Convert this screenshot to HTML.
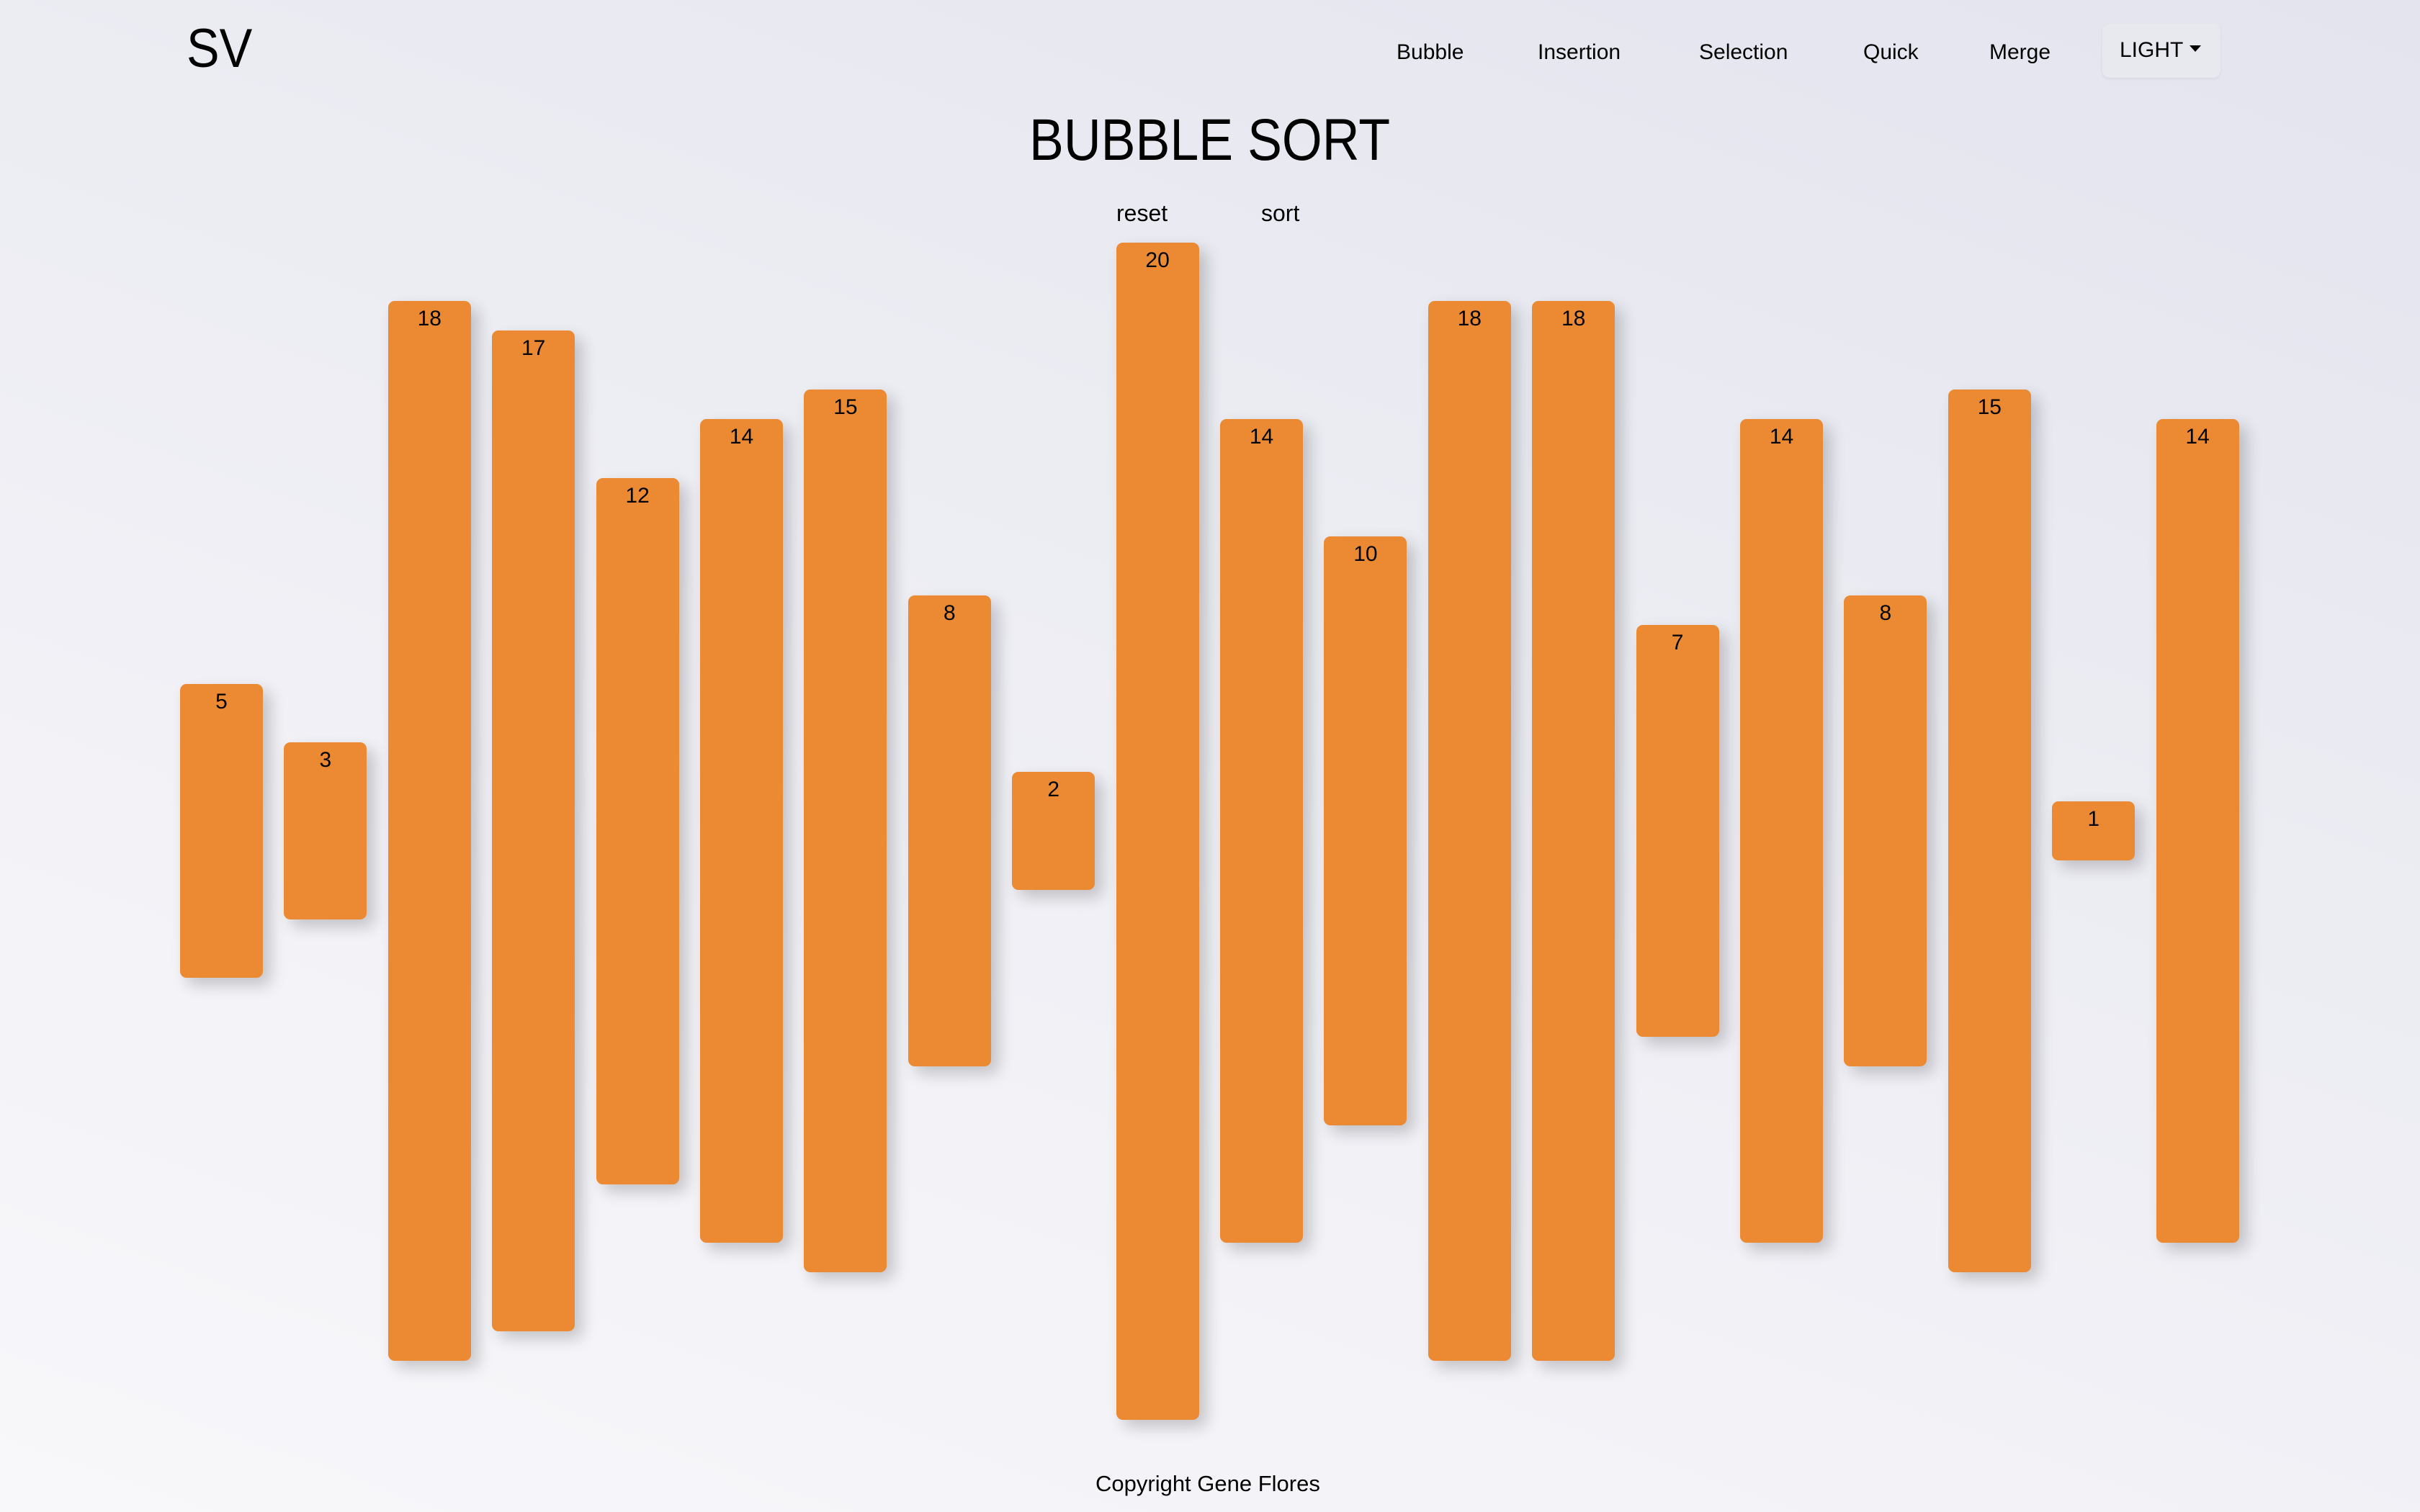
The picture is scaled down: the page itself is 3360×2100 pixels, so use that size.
<!DOCTYPE html>
<html><head><meta charset="utf-8"><style>
html,body{margin:0;padding:0;}
body{width:3360px;height:2100px;position:relative;overflow:hidden;font-family:"Liberation Sans",sans-serif;color:#000;
background:linear-gradient(200deg,#e4e4ef 0%,#ececf3 40%,#f8f8fb 100%);}
.t{position:absolute;white-space:nowrap;line-height:1;}
.nav{font-size:30px;top:58px;}
.b{position:absolute;width:115px;background:#eb8a33;border-radius:9px;box-shadow:10px 10px 22px rgba(0,0,0,0.2);text-align:center;font-size:30px;line-height:1;}
.b span{display:block;margin-top:10px;}
</style></head><body>
<div class="t" style="left:259px;top:30px;font-size:76px;transform:scaleX(0.9);transform-origin:left;">SV</div>
<div class="t nav" style="left:1939px;">Bubble</div>
<div class="t nav" style="left:2135px;">Insertion</div>
<div class="t nav" style="left:2359px;">Selection</div>
<div class="t nav" style="left:2587px;">Quick</div>
<div class="t nav" style="left:2762px;">Merge</div>
<div style="position:absolute;left:2919px;top:33px;width:164px;height:75px;border-radius:10px;background:#e8e8ef;box-shadow:0 2px 4px rgba(0,0,0,0.06);"></div>
<div class="t nav" style="left:2943px;top:55px;">LIGHT</div>
<div style="position:absolute;left:3040px;top:63px;width:0;height:0;border-left:8px solid transparent;border-right:8px solid transparent;border-top:9px solid #000;"></div>
<div class="t" style="left:1429px;top:154px;font-size:82px;transform:scaleX(0.875);transform-origin:left;">BUBBLE SORT</div>
<div class="t" style="left:1550px;top:280px;font-size:32px;">reset</div>
<div class="t" style="left:1751px;top:280px;font-size:32px;">sort</div>
<div class="t" style="left:1521px;top:2045px;font-size:31px;">Copyright Gene Flores</div>

<div class="b" style="left:250px;top:949.6px;height:408.8px"><span>5</span></div>
<div class="b" style="left:394.4px;top:1031.4px;height:245.3px"><span>3</span></div>
<div class="b" style="left:538.8px;top:418.3px;height:1471.5px"><span>18</span></div>
<div class="b" style="left:683.2px;top:459.1px;height:1389.8px"><span>17</span></div>
<div class="b" style="left:827.6px;top:663.5px;height:981px"><span>12</span></div>
<div class="b" style="left:972px;top:581.8px;height:1144.5px"><span>14</span></div>
<div class="b" style="left:1116.4px;top:540.9px;height:1226.3px"><span>15</span></div>
<div class="b" style="left:1260.8px;top:827px;height:654px"><span>8</span></div>
<div class="b" style="left:1405.2px;top:1072.3px;height:163.5px"><span>2</span></div>
<div class="b" style="left:1549.6px;top:336.5px;height:1635px"><span>20</span></div>
<div class="b" style="left:1694px;top:581.8px;height:1144.5px"><span>14</span></div>
<div class="b" style="left:1838.4px;top:745.3px;height:817.5px"><span>10</span></div>
<div class="b" style="left:1982.8px;top:418.3px;height:1471.5px"><span>18</span></div>
<div class="b" style="left:2127.2px;top:418.3px;height:1471.5px"><span>18</span></div>
<div class="b" style="left:2271.6px;top:867.9px;height:572.3px"><span>7</span></div>
<div class="b" style="left:2416px;top:581.8px;height:1144.5px"><span>14</span></div>
<div class="b" style="left:2560.4px;top:827px;height:654px"><span>8</span></div>
<div class="b" style="left:2704.8px;top:540.9px;height:1226.3px"><span>15</span></div>
<div class="b" style="left:2849.2px;top:1113.1px;height:81.8px"><span>1</span></div>
<div class="b" style="left:2993.6px;top:581.8px;height:1144.5px"><span>14</span></div>
</body></html>
